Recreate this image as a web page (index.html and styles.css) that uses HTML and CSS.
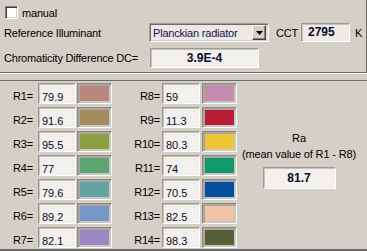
FILE: index.html
```html
<!DOCTYPE html>
<html>
<head>
<meta charset="utf-8">
<link rel="stylesheet" href="styles.css">
</head>
<body>
<div class="top">
  <div class="row row-check">
    <span class="check"></span>
    <span class="lbl">manual</span>
  </div>
  <div class="row row-ref">
    <span class="lbl w-ref">Reference Illuminant</span>
    <div class="combo">
      <span class="combo-text">Planckian radiator</span>
      <span class="combo-btn"><svg width="7" height="4" viewBox="0 0 7 4"><path d="M0 0H7L3.5 4Z" fill="#000"/></svg></span>
    </div>
    <span class="lbl w-cct">CCT</span>
    <span class="field bold f-cct">2795</span>
    <span class="lbl k">K</span>
  </div>
  <div class="row row-dc">
    <span class="lbl w-dc">Chromaticity Difference DC=</span>
    <span class="field bold f-dc">3.9E-4</span>
  </div>
</div>
<div class="sep"></div>
<div class="bottom">
  <div class="grid">
    <span class="rl c1">R1=</span><span class="field val c2">79.9</span><span class="sw c3" style="background-color:#b9877d"></span>
    <span class="rl c4">R8=</span><span class="field val c5">59</span><span class="sw c6" style="background-color:#c58aaf"></span>

    <span class="rl c1">R2=</span><span class="field val c2">91.6</span><span class="sw c3" style="background-color:#a38a5a"></span>
    <span class="rl c4">R9=</span><span class="field val c5">11.3</span><span class="sw c6" style="background-color:#b91c35"></span>

    <span class="rl c1">R3=</span><span class="field val c2">95.5</span><span class="sw c3" style="background-color:#8b9f42"></span>
    <span class="rl c4">R10=</span><span class="field val c5">80.3</span><span class="sw c6" style="background-color:#eac637"></span>

    <span class="rl c1">R4=</span><span class="field val c2">77</span><span class="sw c3" style="background-color:#5ba572"></span>
    <span class="rl c4">R11=</span><span class="field val c5">74</span><span class="sw c6" style="background-color:#0f9a6b"></span>

    <span class="rl c1">R5=</span><span class="field val c2">79.6</span><span class="sw c3" style="background-color:#62a3a3"></span>
    <span class="rl c4">R12=</span><span class="field val c5">70.5</span><span class="sw c6" style="background-color:#034f9c"></span>

    <span class="rl c1">R6=</span><span class="field val c2">89.2</span><span class="sw c3" style="background-color:#7598c9"></span>
    <span class="rl c4">R13=</span><span class="field val c5">82.5</span><span class="sw c6" style="background-color:#eec3a6"></span>

    <span class="rl c1">R7=</span><span class="field val c2">82.1</span><span class="sw c3" style="background-color:#9b87c2"></span>
    <span class="rl c4">R14=</span><span class="field val c5">98.3</span><span class="sw c6" style="background-color:#566236"></span>

    <div class="ra">
      <div class="ra-title">Ra</div>
      <div class="ra-sub">(mean value of R1 - R8)</div>
      <span class="field bold f-ra">81.7</span>
    </div>
  </div>
</div>
</body>
</html>
```

FILE: styles.css
```css
* { box-sizing: border-box; }
html, body {
  margin: 0;
  padding: 0;
  background: #d4d0c8;
  width: 367px;
  height: 251px;
  overflow: hidden;
  font-family: "Liberation Sans", Arial, sans-serif;
  font-size: 11px;
  color: #000;
}

.top {
  height: 73px;
  padding-top: 6px;
  border-right: 1px solid #6d6b67;
  border-bottom: 1px solid #6d6b67;
}
.row {
  display: flex;
  align-items: center;
}
.row-check { height: 13px; padding-left: 5px; }
.row-ref { height: 19px; margin-top: 4px; padding-left: 4px; }
.row-dc { height: 20px; margin-top: 6px; padding-left: 4px; }

.lbl { letter-spacing: -0.2px; white-space: nowrap; }
.check {
  width: 13px;
  height: 13px;
  background: #fff;
  border: 1px solid;
  border-color: #808080 #ffffff #ffffff #808080;
  box-shadow: inset 1px 1px 0 #404040, inset -1px -1px 0 #d4d0c8;
  margin-right: 4px;
}
.w-ref { width: 145px; }
.w-dc { width: 146px; }
.w-cct { width: 25px; margin-left: 7px; }
.k { margin-left: 5px; }

.combo {
  width: 120px;
  height: 19px;
  display: flex;
  align-items: center;
  background: #ebe9e3;
  border: 1px solid;
  border-color: #a09d96 #ffffff #ffffff #a09d96;
  box-shadow: inset 1px 1px 0 #6e6b65, inset -1px -1px 0 #d4d0c8;
  padding: 2px 2px 2px 3px;
}
.combo-text {
  flex: 1;
  letter-spacing: -0.2px;
  color: #10104a;
}
.combo-btn {
  width: 14px;
  height: 15px;
  display: flex;
  align-items: center;
  justify-content: center;
  background: #d4d0c8;
  border: 1px solid;
  border-color: #ffffff #404040 #404040 #ffffff;
  box-shadow: inset -1px -1px 0 #808080;
}

.field {
  display: block;
  background: #f1f0ec;
  border: 1px solid;
  border-color: #9d9a93 #ffffff #ffffff #9d9a93;
  box-shadow: inset 1px 1px 0 #c6c3bc;
  white-space: nowrap;
}
.bold {
  font-weight: bold;
  font-size: 12px;
  color: #0a0a2a;
}
.f-cct {
  width: 49px;
  height: 19px;
  padding-left: 6px;
  line-height: 17px;
  background: #ecebe6;
}
.f-dc {
  width: 109px;
  height: 20px;
  text-align: center;
  line-height: 18px;
}

.sep {
  height: 7px;
  border-top: 1px solid #ffffff;
}

.bottom {
  height: 171px;
  border-top: 1px solid #6d6b67;
  border-bottom: 2px solid #6d6b67;
  padding-top: 2px;
}
.grid {
  display: grid;
  grid-template-columns: 33px 43px 36px 48px 40px 37px 124px;
  grid-template-rows: repeat(7, 21px);
  row-gap: 3px;
}
.c1 { grid-column: 1; }
.c2 { grid-column: 2; }
.c3 { grid-column: 3; }
.c4 { grid-column: 4; }
.c5 { grid-column: 5; }
.c6 { grid-column: 6; }

.rl {
  text-align: right;
  padding-top: 6px;
  line-height: 15px;
  letter-spacing: -0.2px;
}
.c4.rl { padding-right: 0; }
.val {
  width: 38px;
  height: 21px;
  padding: 6px 0 0 3px;
  line-height: 14px;
  color: #0a0a2a;
}
.c2.val { margin-left: 5px; }
.c5.val { margin-left: 2px; }

.sw {
  width: 35px;
  height: 21px;
  border: 1px solid;
  border-color: #8d8a84 #ffffff #ffffff #8d8a84;
  box-shadow: inset 2px 2px 0 #aaa69f, inset -2px -2px 0 #cbc8c1;
}
.c3.sw { margin-left: 1px; }
.c6.sw { margin-left: 2px; }

.ra {
  grid-column: 7;
  grid-row: 1 / 8;
  display: flex;
  flex-direction: column;
  align-items: center;
  padding-top: 48px;
}
.ra-title { line-height: 14px; height: 14px; }
.ra-sub {
  line-height: 14px;
  height: 14px;
  margin-top: 2px;
  letter-spacing: -0.15px;
  white-space: nowrap;
}
.f-ra {
  width: 73px;
  height: 22px;
  margin-top: 6px;
  text-align: center;
  line-height: 20px;
}
```
